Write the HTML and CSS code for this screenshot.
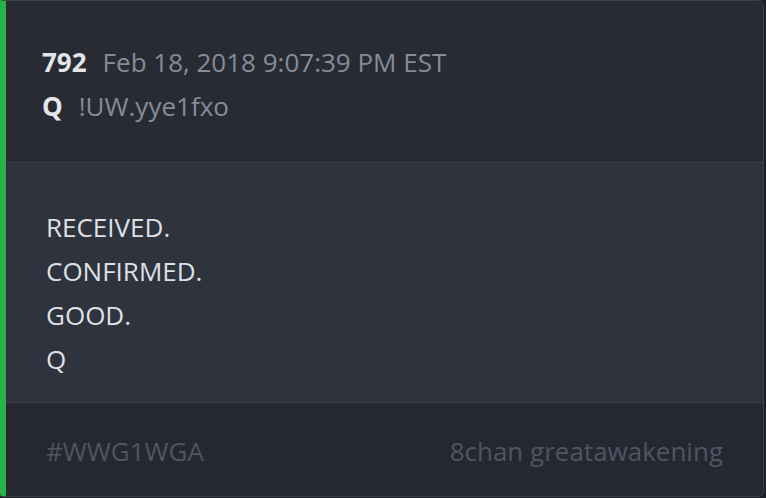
FILE: index.html
```html
<!DOCTYPE html>
<html>
<head>
<meta charset="utf-8">
<link rel="stylesheet" href="styles.css">
</head>
<body>
<div class="card">
  <div class="card-header">
    <div class="line"><span class="num">792</span><span class="meta">Feb 18, 2018 9:07:39 PM EST</span></div>
    <div class="line"><span class="num">Q</span><span class="meta">!UW.yye1fxo</span></div>
  </div>
  <div class="card-body">
    <p>RECEIVED.</p>
    <p>CONFIRMED.</p>
    <p>GOOD.</p>
    <p>Q</p>
  </div>
  <div class="card-footer">
    <span>#WWG1WGA</span>
    <span>8chan greatawakening</span>
  </div>
</div>
</body>
</html>
```

FILE: styles.css
```css
html, body {
  margin: 0;
  padding: 0;
  background: #1d2026;
}
body {
  width: 766px;
  height: 498px;
  overflow: hidden;
  font-family: "Open Sans", "Noto Sans", sans-serif;
}
.card {
  box-sizing: border-box;
  width: 764px;
  height: 497px;
  border: 1px solid #3c414c;
  border-left: 6px solid #27b24a;
  border-radius: 0 6px 6px 4px;
  display: flex;
  flex-direction: column;
  overflow: hidden;
}
.card-header {
  background: #282b33;
  padding: 39px 0 0 36px;
  border-bottom: 1px solid #3c414b;
  height: 162px;
  box-sizing: border-box;
}
.line {
  font-size: 26px;
  line-height: 44px;
  white-space: nowrap;
}
.num {
  font-weight: 700;
  color: #e4e5e8;
  margin-right: 16px;
}
.meta {
  color: #868b98;
}
.card-body {
  background: #2e333d;
  padding: 42px 0 0 40px;
  height: 240px;
  box-sizing: border-box;
  border-bottom: 1px solid #3c414b;
}
.card-body p {
  margin: 0;
  font-size: 26px;
  line-height: 44px;
  color: #dfe0e3;
}
.card-footer {
  flex: 1;
  background: #252831;
  display: flex;
  justify-content: space-between;
  align-items: center;
  padding: 2px 40px 0 40px;
  font-size: 26px;
  color: #4f5562;
}
```
